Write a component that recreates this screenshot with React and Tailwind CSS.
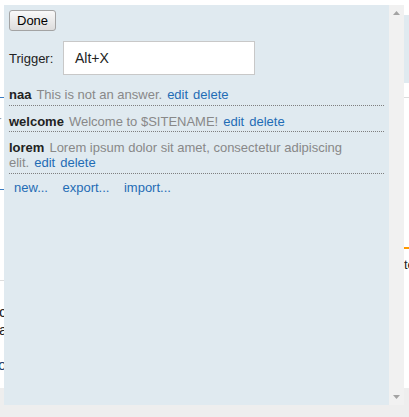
import React from "react";

function Row({ name, desc }) {
  return (
    <div className="border-b border-dotted border-[#7f7f7f] pt-[8px] pb-[2.5px] text-[13px] leading-[15px]">
      <b className="font-bold text-[#222222]">{name}</b>
      <span className="ml-[5px] text-[#888888]">{desc}</span>
      <a className="ml-[5px] text-[#1f6cb5] cursor-pointer">edit</a>
      <a className="ml-[5px] text-[#1f6cb5] cursor-pointer">delete</a>
    </div>
  );
}

export default function App() {
  return (
    <div className="relative w-[409px] h-[417px] overflow-hidden bg-white font-['Liberation_Sans',Arial,sans-serif]">
      {/* page behind the popup */}
      <div className="flex flex-col h-full">
        <div className="flex h-[388px]">
          <div className="w-[200px] flex flex-col overflow-hidden">
            <div className="h-[97px]" />
            <div className="h-px w-[40px] bg-[#3a7cc2]" />
            <div className="mt-[15px] h-[15px] -ml-[3px] text-[13px] leading-[15px] text-[#999999]">r</div>
            <div className="mt-[61px] h-px w-[40px] bg-[#3a7cc2]" />
            <div className="mt-[90px] h-px w-full bg-[#dddddd]" />
            <div className="mt-[22px] h-[18px] -ml-[1px] text-[15px] leading-[18px] text-[#222222]">co</div>
            <div className="h-[18px] -ml-[1px] text-[15px] leading-[18px] text-[#222222]">an</div>
            <div className="mt-[17px] h-[18px] -ml-[2px] text-[15px] leading-[18px] text-[#1d3f6e]">on</div>
          </div>
          <div className="flex-1" />
          <div className="w-[5px] flex flex-col overflow-hidden">
            <div className="h-[15px]" />
            <div className="h-[68px] bg-[#e0eaf0]" />
            <div className="mt-[14px] h-px bg-[#dddddd]" />
            <div className="mt-[149px] h-[2px] bg-[#ff9900]" />
            <div className="mt-[8px] h-[15px] text-[13px] leading-[15px] text-[#222222]">te</div>
          </div>
        </div>
        <div className="flex-1 bg-[#eeeeee]" />
      </div>

      {/* popup */}
      <div className="absolute left-[4px] top-[5px] flex w-[400px] h-[400px]">
        <div className="w-[385px] h-full bg-[#e0eaf0] px-[5px] pt-[5px]">
          <button className="block h-[21px] px-[7px] border border-[#a3a3a3] rounded-[3px] bg-gradient-to-b from-[#f9f9f9] to-[#dddddd] text-[13px] leading-[19px] text-black">
            Done
          </button>
          <div className="flex items-center mt-[10px]">
            <span className="w-[54px] shrink-0 text-[13px] leading-[15px] text-[#222222]">Trigger:</span>
            <div className="w-[192px] h-[34px] border border-[#c8c8c8] bg-white pl-[11px] text-[14px] leading-[32px] text-[#222222]">
              Alt+X
            </div>
          </div>
          <div className="mt-[4px]">
            <Row name="naa" desc="This is not an answer." />
            <Row name="welcome" desc="Welcome to $SITENAME!" />
            <Row name="lorem" desc="Lorem ipsum dolor sit amet, consectetur adipiscing elit." />
            <div className="flex gap-[14.5px] pl-[5px] pt-[6px] text-[13px] leading-[15px] text-[#1f6cb5]">
              <a className="cursor-pointer">new...</a>
              <a className="cursor-pointer">export...</a>
              <a className="cursor-pointer">import...</a>
            </div>
          </div>
        </div>
        <div className="w-[15px] h-full bg-[#f1f1f1] flex flex-col items-center justify-between py-[6px]">
          <svg width="7" height="4" viewBox="0 0 7 4">
            <polygon points="3.5,0 7,4 0,4" fill="#a3a3a3" />
          </svg>
          <svg width="7" height="4" viewBox="0 0 7 4">
            <polygon points="0,0 7,0 3.5,4" fill="#a3a3a3" />
          </svg>
        </div>
      </div>
    </div>
  );
}
